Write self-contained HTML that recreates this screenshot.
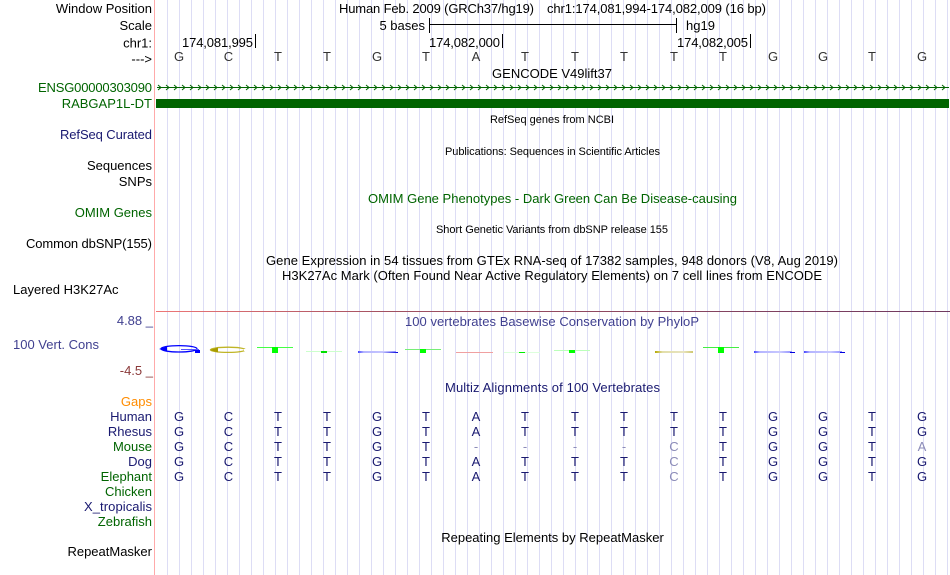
<!DOCTYPE html>
<html><head><meta charset="utf-8"><style>
html,body{margin:0;padding:0;background:#fff;width:950px;height:575px;overflow:hidden}
svg{position:absolute;left:0;top:0;display:block}
text{font-family:"Liberation Sans",sans-serif;font-size:13px;fill:#000}
.r{text-anchor:end}.m{text-anchor:middle}
.g{fill:#006400}.n{fill:#191970}.s{font-size:11px}
.c{text-anchor:middle;fill:#191970}.f{text-anchor:middle;fill:#8c8cb8}
.b{text-anchor:middle;fill:#333}
</style></head><body>
<svg width="950" height="575" viewBox="0 0 950 575" xmlns="http://www.w3.org/2000/svg">
<defs>
<pattern id="grid" x="167" y="0" width="12" height="575" patternUnits="userSpaceOnUse"><rect x="0" width="1" height="575" fill="#ddddf5"/></pattern>
<pattern id="chev" x="156" y="82.500" width="8" height="10" patternUnits="userSpaceOnUse"><path d="M2 2.500L5 5L2 7.500" fill="none" stroke="#006400" stroke-width="1"/></pattern>
<linearGradient id="blu"><stop offset="0" stop-color="#4444ff"/><stop offset=".15" stop-color="#b4b4ff"/><stop offset=".7" stop-color="#c8c8ff"/><stop offset="1" stop-color="#9090ff"/></linearGradient>
<linearGradient id="blend"><stop offset="0" stop-color="#c8c8ff"/><stop offset="1" stop-color="#0000dd"/></linearGradient>
<linearGradient id="gld"><stop offset="0" stop-color="#b5a800"/><stop offset=".2" stop-color="#e2deaa"/><stop offset=".75" stop-color="#e8e4c0"/><stop offset="1" stop-color="#cfc870"/></linearGradient>
<linearGradient id="rule"><stop offset="0" stop-color="#ee7777"/><stop offset=".3" stop-color="#a05060"/><stop offset="1" stop-color="#703a60"/></linearGradient>
</defs>
<rect x="167" width="783" height="575" fill="url(#grid)"/>
<rect x="154" width="1" height="575" fill="#ffaaaa"/>

<text class="r" x="152" y="13">Window Position</text>
<text class="r" x="152" y="30">Scale</text>
<text class="r" x="152" y="47.500">chr1:</text>
<text class="r" x="152" y="63.500">---&gt;</text>
<text x="339" y="13" textLength="195">Human Feb. 2009 (GRCh37/hg19)</text>
<text x="547" y="13" textLength="219">chr1:174,081,994-174,082,009 (16 bp)</text>
<text class="r" x="425" y="30">5 bases</text>
<path d="M429.500 18V33M429 24.500H677M676.500 18V33" stroke="#000" fill="none"/>
<text x="686" y="30">hg19</text>
<text x="182" y="47" textLength="71">174,081,995</text><rect x="255" y="34" width="1" height="14" fill="#000"/>
<text x="429" y="47" textLength="71">174,082,000</text><rect x="502" y="34" width="1" height="14" fill="#000"/>
<text x="677" y="47" textLength="71">174,082,005</text><rect x="750" y="34" width="1" height="14" fill="#000"/>

<g>
<text class="b" x="179" y="61">G</text><text class="b" x="228.500" y="61">C</text><text class="b" x="278" y="61">T</text><text class="b" x="327" y="61">T</text><text class="b" x="377" y="61">G</text><text class="b" x="426" y="61">T</text><text class="b" x="476" y="61">A</text><text class="b" x="525" y="61">T</text><text class="b" x="575" y="61">T</text><text class="b" x="624" y="61">T</text><text class="b" x="674" y="61">T</text><text class="b" x="723" y="61">T</text><text class="b" x="773" y="61">G</text><text class="b" x="823" y="61">G</text><text class="b" x="872" y="61">T</text><text class="b" x="922" y="61">G</text>
</g>
<text class="m" x="552" y="78">GENCODE V49lift37</text>
<text class="g" x="38" y="92" textLength="114">ENSG00000303090</text>
<rect x="157" y="87" width="792" height="1" fill="#006400"/>
<rect x="156" y="82" width="793" height="11" fill="url(#chev)"/>
<text class="r g" x="152" y="108">RABGAP1L-DT</text>
<rect x="156" y="99" width="793" height="9" fill="#006400"/>

<text class="m s" x="552" y="123">RefSeq genes from NCBI</text>
<text class="n" x="60" y="139" textLength="92">RefSeq Curated</text>
<text class="s" x="445" y="155" textLength="215">Publications: Sequences in Scientific Articles</text>
<text class="r" x="152" y="170">Sequences</text>
<text class="r" x="152" y="186">SNPs</text>
<text class="g" x="368" y="203" textLength="369">OMIM Gene Phenotypes - Dark Green Can Be Disease-causing</text>
<text class="r g" x="152" y="217">OMIM Genes</text>
<text class="s" x="436" y="233" textLength="232">Short Genetic Variants from dbSNP release 155</text>
<text x="26" y="248" textLength="126">Common dbSNP(155)</text>
<text x="266" y="265" textLength="572">Gene Expression in 54 tissues from GTEx RNA-seq of 17382 samples, 948 donors (V8, Aug 2019)</text>
<text x="282" y="280" textLength="540">H3K27Ac Mark (Often Found Near Active Regulatory Elements) on 7 cell lines from ENCODE</text>
<text x="13" y="294">Layered H3K27Ac</text>

<rect x="156" y="311" width="794" height="1" fill="url(#rule)"/>
<text x="405" y="326" textLength="294" style="fill:#404090">100 vertebrates Basewise Conservation by PhyloP</text>
<text class="r" x="153" y="325" style="fill:#404090">4.88 _</text>
<text x="13" y="349" style="fill:#404090">100 Vert. Cons</text>
<text class="r" x="153" y="375" style="fill:#8b3a3a">-4.5 _</text>

<!-- conservation logo -->
<g fill="none">
<ellipse cx="179" cy="348.800" rx="18" ry="3.200" stroke="#0000ff" stroke-width="1.300"/>
<path d="M181 349.500H199" stroke="#5555ff"/>
<rect x="195" y="350" width="5" height="3" fill="#0000ff"/>
<path d="M159 349L167 346.500L167 351.500Z" fill="#0000ff"/>
<ellipse cx="228" cy="349.800" rx="17.500" ry="2.600" stroke="#b5a800" stroke-width="1.300" opacity=".85"/>
<path d="M209.500 350L218 347.500V352.500Z" fill="#a89c00"/>
<rect x="244" y="349" width="4" height="2" fill="#fff"/>
<rect x="257" y="347" width="36" height="1" fill="#44ff44"/>
<rect x="272" y="347" width="6" height="6" fill="#00ff00"/>
<rect x="306" y="351" width="36" height="1" fill="#ccffcc"/>
<rect x="321" y="351" width="6" height="2" fill="#00e000"/>
<rect x="358" y="351" width="38" height="2" fill="url(#blu)"/>
<rect x="382" y="352" width="16" height="1" fill="url(#blend)"/>
<rect x="405" y="349" width="36" height="1" fill="#77ee77"/>
<rect x="420" y="349" width="6" height="4" fill="#00ff00"/>
<rect x="456" y="352" width="37" height="1" fill="#f0a0a0"/>
<rect x="504" y="352" width="36" height="1" fill="#ddffdd"/>
<rect x="519" y="352" width="6" height="1" fill="#00ee00"/>
<rect x="554" y="350" width="36" height="1" fill="#bbffbb"/>
<rect x="569" y="350" width="6" height="3" fill="#00ff00"/>
<rect x="655" y="351" width="38" height="2" fill="url(#gld)"/>
<rect x="703" y="347" width="36" height="1" fill="#44ee44"/>
<rect x="718" y="347" width="6" height="6" fill="#00ff00"/>
<rect x="754" y="351" width="38" height="2" fill="url(#blu)"/>
<rect x="790" y="352" width="5" height="1" fill="#0000dd"/>
<rect x="804" y="351" width="38" height="2" fill="url(#blu)"/>
<rect x="840" y="352" width="5" height="1" fill="#0000dd"/>
</g>

<text x="445" y="392" textLength="215" class="n">Multiz Alignments of 100 Vertebrates</text>
<text class="r" x="152" y="406" style="fill:#ff8c00">Gaps</text>
<text class="r n" x="152" y="421">Human</text>
<text class="r n" x="152" y="436">Rhesus</text>
<text class="r g" x="152" y="451">Mouse</text>
<text class="r n" x="152" y="466">Dog</text>
<text class="r g" x="152" y="481">Elephant</text>
<text class="r g" x="152" y="496">Chicken</text>
<text class="n" x="84" y="511" textLength="68">X_tropicalis</text>
<text class="r g" x="152" y="526">Zebrafish</text>
<text class="m" x="552.500" y="542">Repeating Elements by RepeatMasker</text>
<text class="r" x="152" y="556">RepeatMasker</text>

<g>
<text class="c" x="179" y="421">G</text><text class="c" x="228.500" y="421">C</text><text class="c" x="278" y="421">T</text><text class="c" x="327" y="421">T</text><text class="c" x="377" y="421">G</text><text class="c" x="426" y="421">T</text><text class="c" x="476" y="421">A</text><text class="c" x="525" y="421">T</text><text class="c" x="575" y="421">T</text><text class="c" x="624" y="421">T</text><text class="c" x="674" y="421">T</text><text class="c" x="723" y="421">T</text><text class="c" x="773" y="421">G</text><text class="c" x="823" y="421">G</text><text class="c" x="872" y="421">T</text><text class="c" x="922" y="421">G</text>
<text class="c" x="179" y="436">G</text><text class="c" x="228.500" y="436">C</text><text class="c" x="278" y="436">T</text><text class="c" x="327" y="436">T</text><text class="c" x="377" y="436">G</text><text class="c" x="426" y="436">T</text><text class="c" x="476" y="436">A</text><text class="c" x="525" y="436">T</text><text class="c" x="575" y="436">T</text><text class="c" x="624" y="436">T</text><text class="c" x="674" y="436">T</text><text class="c" x="723" y="436">T</text><text class="c" x="773" y="436">G</text><text class="c" x="823" y="436">G</text><text class="c" x="872" y="436">T</text><text class="c" x="922" y="436">G</text>
<text class="c" x="179" y="451">G</text><text class="c" x="228.500" y="451">C</text><text class="c" x="278" y="451">T</text><text class="c" x="327" y="451">T</text><text class="c" x="377" y="451">G</text><text class="c" x="426" y="451">T</text><text class="f" x="476" y="451">-</text><text class="f" x="525" y="451">-</text><text class="f" x="575" y="451">-</text><text class="f" x="624" y="451">-</text><text class="f" x="674" y="451">C</text><text class="c" x="723" y="451">T</text><text class="c" x="773" y="451">G</text><text class="c" x="823" y="451">G</text><text class="c" x="872" y="451">T</text><text class="f" x="922" y="451">A</text>
<text class="c" x="179" y="466">G</text><text class="c" x="228.500" y="466">C</text><text class="c" x="278" y="466">T</text><text class="c" x="327" y="466">T</text><text class="c" x="377" y="466">G</text><text class="c" x="426" y="466">T</text><text class="c" x="476" y="466">A</text><text class="c" x="525" y="466">T</text><text class="c" x="575" y="466">T</text><text class="c" x="624" y="466">T</text><text class="f" x="674" y="466">C</text><text class="c" x="723" y="466">T</text><text class="c" x="773" y="466">G</text><text class="c" x="823" y="466">G</text><text class="c" x="872" y="466">T</text><text class="c" x="922" y="466">G</text>
<text class="c" x="179" y="481">G</text><text class="c" x="228.500" y="481">C</text><text class="c" x="278" y="481">T</text><text class="c" x="327" y="481">T</text><text class="c" x="377" y="481">G</text><text class="c" x="426" y="481">T</text><text class="c" x="476" y="481">A</text><text class="c" x="525" y="481">T</text><text class="c" x="575" y="481">T</text><text class="c" x="624" y="481">T</text><text class="f" x="674" y="481">C</text><text class="c" x="723" y="481">T</text><text class="c" x="773" y="481">G</text><text class="c" x="823" y="481">G</text><text class="c" x="872" y="481">T</text><text class="c" x="922" y="481">G</text>
</g>
</svg>
</body></html>
